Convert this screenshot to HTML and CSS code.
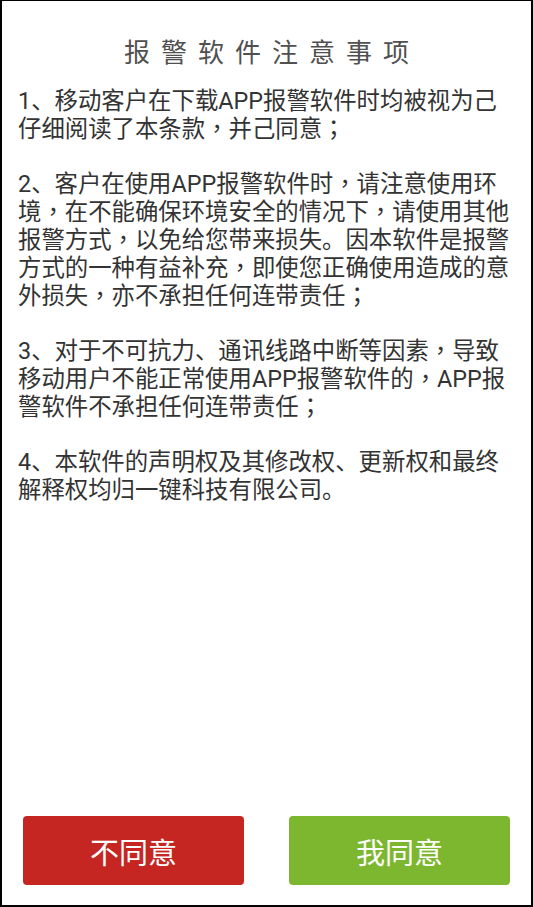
FILE: index.html
```html
<!DOCTYPE html>
<html lang="zh-CN">
<head>
<meta charset="utf-8">
<title>报警软件注意事项</title>
<link rel="stylesheet" href="styles.css">
</head>
<body>
<div class="screen">
  <h1 class="title">报警软件注意事项</h1>
  <div class="terms">
    <p>1、移动客户在下载APP报警软件时均被视为己仔细阅读了本条款<span class="cp" lang="zh-TW">，</span>并己同意<span class="cp" lang="zh-TW">；</span></p>
    <p>2、客户在使用APP报警软件时<span class="cp" lang="zh-TW">，</span>请注意使用环境<span class="cp" lang="zh-TW">，</span>在不能确保环境安全的情况下<span class="cp" lang="zh-TW">，</span>请使用其他报警方式<span class="cp" lang="zh-TW">，</span>以免给您带来损失。因本软件是报警方式的一种有益补充<span class="cp" lang="zh-TW">，</span>即使您正确使用造成的意外损失<span class="cp" lang="zh-TW">，</span>亦不承担任何连带责任<span class="cp" lang="zh-TW">；</span></p>
    <p>3、对于不可抗力、通讯线路中断等因素<span class="cp" lang="zh-TW">，</span>导致移动用户不能正常使用APP报警软件的<span class="cp" lang="zh-TW">，</span>APP报警软件不承担任何连带责任<span class="cp" lang="zh-TW">；</span></p>
    <p>4、本软件的声明权及其修改权、更新权和最终解释权均归一键科技有限公司。</p>
  </div>
  <div class="actions">
    <button class="btn btn-decline" type="button">不同意</button>
    <button class="btn btn-accept" type="button">我同意</button>
  </div>
</div>
</body>
</html>
```

FILE: styles.css
```css
html, body {
  margin: 0;
  padding: 0;
  background: #ffffff;
}

.screen {
  box-sizing: border-box;
  width: 533px;
  height: 907px;
  border: 2px solid #000000;
  border-top-width: 1px;
  background: #ffffff;
  display: flex;
  flex-direction: column;
  font-family: "Roboto", "Noto Sans CJK SC", sans-serif;
}

.title {
  margin: 0;
  padding: 32px 0 0 11px;
  font-size: 26px;
  line-height: 40px;
  font-weight: normal;
  letter-spacing: 11px;
  text-align: center;
  color: #505050;
}

.terms {
  padding: 15px 16px 0 16px;
  color: #333333;
  font-size: 23.4px;
  line-height: 27.8px;
}

.terms p {
  margin: 0 0 27.8px 0;
}

.cp {
  font-family: "Noto Sans CJK TC", "Noto Sans CJK SC", sans-serif;
  line-height: 0;
}

.actions {
  margin-top: auto;
  display: flex;
  gap: 45px;
  padding: 0 21px 20px 21px;
}

.btn {
  flex: 1;
  height: 69px;
  border: none;
  border-radius: 4px;
  color: #ffffff;
  font-family: "Roboto", "Noto Sans CJK SC", sans-serif;
  font-size: 29px;
  padding: 0;
}

.btn-decline {
  background: #c62622;
}

.btn-accept {
  background: #7db72f;
}
```
